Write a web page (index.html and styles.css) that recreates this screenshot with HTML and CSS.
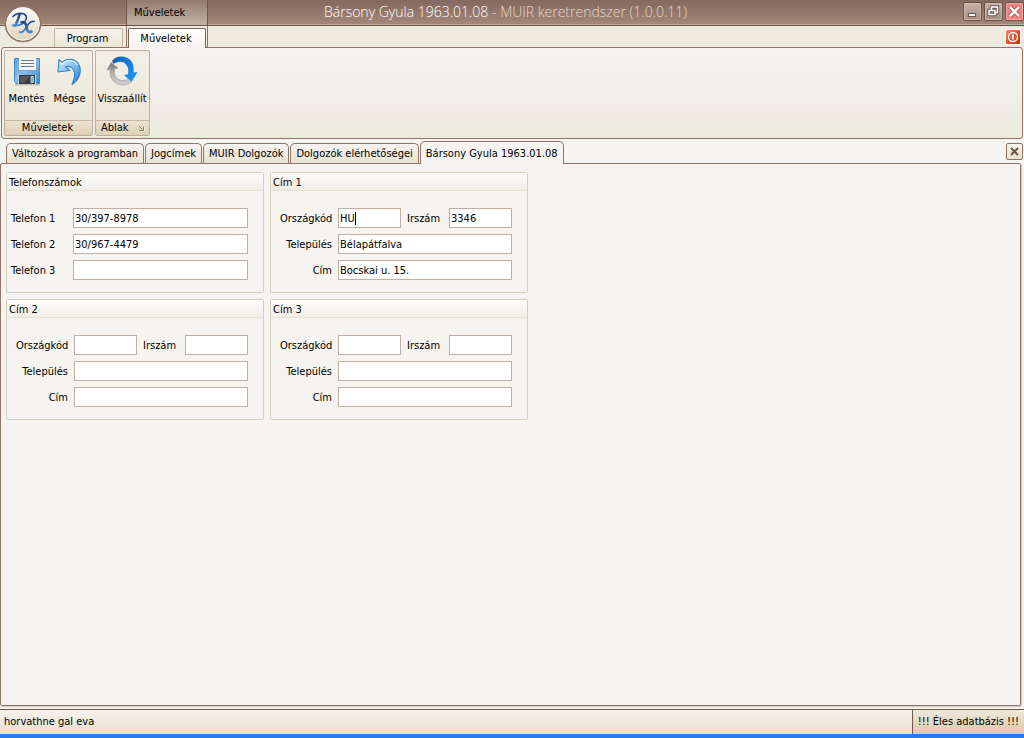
FILE: index.html
```html
<!DOCTYPE html>
<html lang="hu">
<head>
<meta charset="utf-8">
<title>Bársony Gyula 1963.01.08 - MUIR keretrendszer (1.0.0.11)</title>
<link rel="stylesheet" href="styles.css">
</head>
<body>
<div class="app">
  <header class="titlebar">
    <div class="context-title">Műveletek</div>
    <h1 class="title">Bársony Gyula 1963.01.08 <span class="title-app">- MUIR keretrendszer (1.0.0.11)</span></h1>
    <div class="window-buttons">
      <button class="win" aria-label="Kis méret"><svg width="17" height="17" viewBox="0 0 17 17"><path d="M4 10h8v4H4z" fill="#6f574c"/><path d="M5 11h6v2H5z" fill="#fff"/></svg></button>
      <button class="win" aria-label="Előző méret"><svg width="17" height="17" viewBox="0 0 17 17" fill="none"><path d="M6.500 7V4h6v5.500H10M4 7.500h6v4H4z" stroke="#6f574c" stroke-width="3.400"/><path d="M6.500 7V4h6v5.500H10M4 7.500h6v4H4z" stroke="#fff" stroke-width="1.500"/></svg></button>
      <button class="win win-close" aria-label="Bezárás"><svg width="17" height="17" viewBox="0 0 17 17"><path d="M4 4l9 9M13 4l-9 9" stroke="#a24c48" stroke-width="4.500"/><path d="M4 4l9 9M13 4l-9 9" stroke="#fff" stroke-width="2.600"/></svg></button>
    </div>
    <button class="orb" aria-label="Alkalmazás menü">
      <svg width="38" height="38" viewBox="0 0 38 38">
        <defs>
          <linearGradient id="orbFill" x1="0" y1="0" x2="0" y2="1"><stop offset="0" stop-color="#fffefb"/><stop offset=".5" stop-color="#eee8db"/><stop offset="1" stop-color="#dfd2b3"/></linearGradient>
          <linearGradient id="orbInk" x1="0" y1="0" x2="0" y2="1"><stop offset="0" stop-color="#1e4b83"/><stop offset="1" stop-color="#4387c6"/></linearGradient>
        </defs>
        <circle cx="19" cy="19" r="17.500" fill="url(#orbFill)" stroke="#8e7568" stroke-width="1.500"/>
        <circle cx="19" cy="19" r="16.200" fill="none" stroke="#fff" stroke-opacity=".8"/>
        <g fill="none" stroke="url(#orbInk)" stroke-linecap="round" stroke-linejoin="round">
          <path d="M15.500 9.500c-1 4-2 7.500-4.500 11" stroke-width="2.600"/>
          <path d="M9 11.500c2-3 8-4 11-2.500 4 2 2.500 7.500-1.500 9.800-3.500 2-7 2.200-10 1.500" stroke-width="1.700"/>
          <path d="M17.500 17.500c3-1.500 4.500 1 5 4.500s1.500 6.500 5 4.500" stroke-width="2.600"/>
          <path d="M30 16.500c-3-1-5.500 2-7.500 5.500s-4 6.500-7 5" stroke-width="1.700"/>
        </g>
      </svg>
    </button>
  </header>

  <nav class="ribbon-tabs">
    <button class="ribbon-tab">Program</button>
    <div class="context-slot"><button class="ribbon-tab ribbon-tab-active">Műveletek</button></div>
    <button class="power" aria-label="Kilépés"><svg width="16" height="16" viewBox="0 0 16 16"><defs><linearGradient id="redFill" x1="0" y1="0" x2="1" y2="1"><stop offset="0" stop-color="#ef8666"/><stop offset="1" stop-color="#cf2703"/></linearGradient></defs><rect width="16" height="16" fill="#fff"/><rect x="1" y="1" width="14" height="14" rx="1" fill="url(#redFill)"/><circle cx="8" cy="8" r="4.500" fill="none" stroke="#fff" stroke-width="1.300"/><path d="M8 5.500v5" stroke="#fff" stroke-width="1.700"/></svg></button>
  </nav>

  <section class="ribbon">
    <div class="ribbon-group">
      <div class="ribbon-items">
        <button class="tool">
          <svg width="32" height="32" viewBox="0 0 32 32">
            <defs><linearGradient id="disk" x1="0" y1="0" x2="1" y2="1"><stop offset="0" stop-color="#5c9ed9"/><stop offset=".45" stop-color="#8ebfe9"/><stop offset="1" stop-color="#3d85c9"/></linearGradient></defs>
            <path d="M4 29.500h25" stroke="#8a8170" stroke-opacity=".4" stroke-width="2"/>
            <path d="M3.500 3.500h25v25h-23l-2-2z" fill="url(#disk)" stroke="#4b88c3"/>
            <path d="M8 3h17v12H8z" fill="#f4f6f8"/><path d="M8 15.500h17" stroke="#6fa4d6"/>
            <path d="M10 5.500h13M10 8.500h13M10 11.500h13" stroke="#6d757c"/>
            <path d="M8 20h16v9H8z" fill="#343a42"/><path d="M9 21h10l-6 7H9z" fill="#535961"/><path d="M20 21.500h2.500v6H20z" fill="#5fa4dd" stroke="#d4e8f8" stroke-width=".8"/>
            <path d="M24.500 20v9M7.500 20v9" stroke="#c9e1f5"/>
          </svg>
          <span>Mentés</span>
        </button>
        <button class="tool">
          <svg width="32" height="32" viewBox="0 0 32 32">
            <defs><linearGradient id="undo" x1="0" y1="0" x2="1" y2="1"><stop offset="0" stop-color="#c6e7fb"/><stop offset=".5" stop-color="#7fbff0"/><stop offset="1" stop-color="#2472be"/></linearGradient></defs>
            <path d="M5 4.500l3 3C13 2.500 21 3.500 24.500 9c4 7 1 16-6.500 20.500 2.500-5.500 4-12 .5-16-2-2.300-4.500-2.500-7-1.500l4.500 3.500L4 17z" fill="url(#undo)" stroke="#347fc2" stroke-width="1.100" stroke-linejoin="round"/>
            <path d="M6 7l2 2.200C13.500 3.900 20.500 5 23.500 10" fill="none" stroke="#e9f7ff" stroke-width="1.200"/>
          </svg>
          <span>Mégse</span>
        </button>
      </div>
      <div class="ribbon-caption">Műveletek</div>
    </div>
    <div class="ribbon-group ribbon-group-window">
      <div class="ribbon-items">
        <button class="tool">
          <svg width="32" height="32" viewBox="0 0 32 32">
            <defs>
              <linearGradient id="arcBlue" x1="0" y1="0" x2="1" y2="1"><stop offset="0" stop-color="#1a5da7"/><stop offset=".5" stop-color="#1380e0"/><stop offset="1" stop-color="#2399f2"/></linearGradient>
              <linearGradient id="arcGrey" x1="0" y1="0" x2="0" y2="1"><stop offset="0" stop-color="#777"/><stop offset=".5" stop-color="#b4b4b4"/><stop offset="1" stop-color="#d2d2d2"/></linearGradient>
            </defs>
            <path d="M6 6C10 0 21 0 25.500 6.500c2.200 3.200 2.500 6.500 2 11l4-.5L25.500 27l-7.500-7 4-.8c.8-4 .2-7.700-2.200-10C17 6 11.500 6 7.500 9z" fill="url(#arcBlue)"/>
            <path d="M1 15L5 7.500 12 13l-3.500.7C8 19 9.500 23.500 14 25c3 1 6 .5 8.500-1.200l3 3.200C21 31 13 31 8.500 27 4.500 23.500 3.800 19 4.300 14.700z" fill="url(#arcGrey)" stroke="#8c8c8c" stroke-width=".5"/>
          </svg>
          <span>Visszaállít</span>
        </button>
      </div>
      <div class="ribbon-caption">Ablak
        <button class="launcher" aria-label="Ablak beállításai"><svg width="7" height="7" viewBox="0 0 7 7" fill="none"><path d="M2 1.500L5 5M6 2v4H2" stroke="#fff"/><path d="M1 1l3.500 3.500M5.500 1.500v4h-4" stroke="#8d776b"/></svg></button>
      </div>
    </div>
  </section>

  <nav class="doc-tabs">
    <button class="doc-tab">Változások a programban</button>
    <button class="doc-tab">Jogcímek</button>
    <button class="doc-tab">MUIR Dolgozók</button>
    <button class="doc-tab">Dolgozók elérhetőségei</button>
    <button class="doc-tab doc-tab-active">Bársony Gyula 1963.01.08</button>
    <button class="tab-close" aria-label="Lap bezárása"><svg width="9" height="9" viewBox="0 0 9 9"><path d="M1 1l7 7M8 1L1 8" stroke="#6c5548" stroke-width="2"/></svg></button>
  </nav>

  <main class="page">
    <form class="groups">
      <section class="group">
        <h2 class="group-title">Telefonszámok</h2>
        <div class="fields fields-phone">
          <div class="row"><label for="t1">Telefon 1</label><input id="t1" type="text" value="30/397-8978"></div>
          <div class="row"><label for="t2">Telefon 2</label><input id="t2" type="text" value="30/967-4479"></div>
          <div class="row"><label for="t3">Telefon 3</label><input id="t3" type="text"></div>
        </div>
      </section>
      <section class="group">
        <h2 class="group-title">Cím 1</h2>
        <div class="fields fields-address">
          <div class="row"><label for="o1">Országkód</label><span class="active-field"><input id="o1" type="text" value="HU"><span class="caret"></span></span><label class="zip" for="i1">Irszám</label><input id="i1" type="text" value="3346"></div>
          <div class="row"><label for="v1">Település</label><input id="v1" type="text" value="Bélapátfalva"></div>
          <div class="row"><label for="c1">Cím</label><input id="c1" type="text" value="Bocskai u. 15."></div>
        </div>
      </section>
      <section class="group">
        <h2 class="group-title">Cím 2</h2>
        <div class="fields fields-address">
          <div class="row"><label for="o2">Országkód</label><input id="o2" type="text"><label class="zip" for="i2">Irszám</label><input id="i2" type="text"></div>
          <div class="row"><label for="v2">Település</label><input id="v2" type="text"></div>
          <div class="row"><label for="c2">Cím</label><input id="c2" type="text"></div>
        </div>
      </section>
      <section class="group">
        <h2 class="group-title">Cím 3</h2>
        <div class="fields fields-address">
          <div class="row"><label for="o3">Országkód</label><input id="o3" type="text"><label class="zip" for="i3">Irszám</label><input id="i3" type="text"></div>
          <div class="row"><label for="v3">Település</label><input id="v3" type="text"></div>
          <div class="row"><label for="c3">Cím</label><input id="c3" type="text"></div>
        </div>
      </section>
    </form>
  </main>

  <footer class="status">
    <div class="status-user">horvathne gal eva</div>
    <div class="status-db">!!! Éles adatbázis !!!</div>
  </footer>
</div>
</body>
</html>
```
FILE: styles.css
```css
* { box-sizing: border-box; }
body {
  margin: 0;
  background: #f6f4f0;
  color: #000;
  font: 11px/14px Tahoma, "DejaVu Sans Condensed", "Noto Sans", sans-serif;
}
button, input { font: inherit; color: inherit; }
button { padding: 0; border: 0; background: none; }
svg { display: block; }
.app { display: flex; flex-direction: column; min-height: 100vh; border-bottom: 4px solid #2b7be4; }

.titlebar {
  position: relative;
  display: flex;
  height: 26px;
  padding-left: 126px;
  background: linear-gradient(#836a5f, #8c7165 30%, #a58a7b);
  border-bottom: 1px solid #6a5045;
  box-shadow: inset 0 -1px #c2aa9c;
}
.context-title {
  width: 82px;
  padding: 6px 7px;
  border: solid #6f574c;
  border-width: 0 1px;
  background: linear-gradient(#927b70, #c3b2a8);
}
.title {
  flex: 1;
  margin: 0;
  padding-left: 116px;
  font: 300 14px/24px Tahoma, "Open Sans", sans-serif;
  color: #fff;
  white-space: nowrap;
}
.title-app { color: #e2d9ca; }
.window-buttons { display: flex; gap: 2px; padding-top: 2px; }
.win {
  display: grid;
  place-items: center;
  width: 19px;
  height: 19px;
  border: 1px solid #6a5247;
  border-radius: 2px;
  background: linear-gradient(#c6b3a9, #a68c7f);
  box-shadow: inset 0 0 0 1px #cbbbb1;
}
.win-close { background: #f08286; box-shadow: inset 0 0 0 1px #f7a7a7; }
.orb { position: absolute; left: 4px; top: 5px; z-index: 2; }

.ribbon-tabs {
  display: flex;
  align-items: flex-end;
  height: 21px;
  padding-left: 54px;
  background: #eeeade;
}
.ribbon-tab {
  width: 69px;
  height: 19px;
  padding: 1px 2px 0 0;
  border: 1px solid #c3b29f;
  border-bottom: 0;
  border-radius: 2px 2px 0 0;
  background: linear-gradient(#f6f3eb, #ebe6d7);
}
.context-slot {
  display: flex;
  align-items: flex-end;
  width: 82px;
  height: 21px;
  margin-left: 3px;
  padding: 0 1px;
  border: solid #8e7568;
  border-width: 0 1px;
}
.ribbon-tab-active {
  position: relative;
  z-index: 1;
  width: 78px;
  height: 20px;
  margin-bottom: -1px;
  padding-top: 0;
  border-color: #7d6356;
  background: linear-gradient(#fff, #f6f4f0);
}
.power { margin: 0 3px 2px auto; }

.ribbon {
  display: flex;
  gap: 2px;
  height: 92px;
  margin: 0 1px;
  padding: 2px;
  border: 1px solid #8e7568;
  border-radius: 3px;
  background: linear-gradient(#f6f4f0, #f0ece5 70%, #edeadd);
}
.ribbon-group {
  display: flex;
  flex-direction: column;
  width: 89px;
  border: 1px solid #bfad9f;
  border-radius: 2px;
  background: linear-gradient(#f2efe7, #e9e5d6);
}
.ribbon-group-window { width: 55px; }
.ribbon-items { display: flex; flex: 1; justify-content: center; padding: 4px 1px 0 0; }
.tool { display: flex; flex-direction: column; align-items: center; gap: 5px; width: 43px; white-space: nowrap; }
.ribbon-caption {
  height: 15px;
  padding-right: 2px;
  border-top: 1px solid #c6b4a2;
  background: linear-gradient(#ebe3d0, #ddd0b4);
  text-align: center;
}
.ribbon-group-window .ribbon-caption { display: flex; align-items: center; justify-content: space-between; padding: 0 4px 0 5px; }

.doc-tabs {
  display: flex;
  align-items: flex-end;
  gap: 1px;
  height: 24px;
  padding: 0 1px 0 6px;
}
.doc-tab {
  height: 20px;
  padding: 1px 5px 0;
  border: 1px solid #8e7568;
  border-bottom: 0;
  border-radius: 5px 5px 0 0;
  background: linear-gradient(#f6f4f0, #e8e2d0);
  white-space: nowrap;
}
.doc-tab-active {
  position: relative;
  z-index: 1;
  height: 23px;
  margin-bottom: -1px;
  background: #f6f4f0;
}
.tab-close {
  display: grid;
  place-items: center;
  width: 17px;
  height: 17px;
  margin: 0 0 3px auto;
  border: 1px solid #8e7568;
  border-radius: 2px;
  background: linear-gradient(#f8f6f0, #e7e1ce);
}

.page {
  flex: 1;
  margin-right: 3px;
  padding: 8px 6px 8px 5px;
  border: 1px solid #8e7568;
  border-radius: 2px;
  box-shadow: 1px 1px 1px #cfc8bd;
}
.groups { display: grid; grid-template-columns: 258px 258px; gap: 6px; }
.group { border: 1px solid #d6cebd; border-radius: 2px; }
.group-title {
  margin: 0;
  padding: 3px 2px 0;
  height: 18px;
  border-bottom: 1px solid #e8dfcc;
  background: linear-gradient(#fdfdfc, #f1eee6);
  font: inherit;
}
.fields { display: flex; flex-direction: column; gap: 6px; padding: 17px 15px 12px 9px; }
.fields-phone { padding-left: 4px; }
.row { display: flex; align-items: center; gap: 6px; height: 20px; }
.row label { flex: none; width: 52px; padding-top: 1px; text-align: right; white-space: nowrap; }
.fields-phone label { width: 56px; text-align: left; }
.row .zip { width: 36px; text-align: left; }
.row input {
  flex: 1 1 30px;
  width: 0;
  min-width: 0;
  height: 20px;
  padding: 0 1px;
  border: 1px solid #bfb0a5;
  border-radius: 0;
  background: #fff;
  outline: 0;
}
.active-field { position: relative; display: flex; flex: 1 1 30px; }
.caret { position: absolute; left: 17px; top: 4px; width: 1px; height: 13px; background: #000; }

.status {
  display: flex;
  height: 25px;
  margin-top: 3px;
  border-top: 1px solid #70564b;
  background: linear-gradient(#f5f2ec, #e6e0cf);
  line-height: 24px;
}
.status-user { flex: 1; padding-left: 4px; }
.status-db {
  padding: 0 5px;
  border-left: 1px solid #70564b;
  background: linear-gradient(#efe8db, #d9cba9);
}
```
